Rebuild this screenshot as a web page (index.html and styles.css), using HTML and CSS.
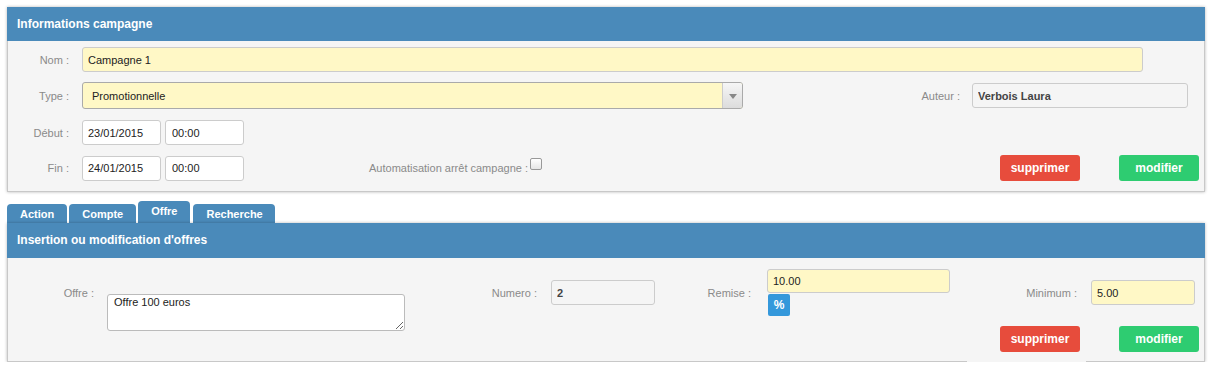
FILE: index.html
```html
<!DOCTYPE html>
<html lang="fr">
<head>
    <meta charset="UTF-8">
    <meta name="viewport" content="width=device-width, initial-scale=1.0">
    <title>Campagne</title>
    <link rel="stylesheet" href="styles.css">
</head>
<body>
    <div class="panel">
        <div class="panel-header">Informations campagne</div>
        <div class="panel-body campagne">
            <div class="row">
                <label class="lbl">Nom :</label>
                <input type="text" class="field yellow nom" value="Campagne 1">
            </div>
            <div class="row row-type">
                <label class="lbl">Type :</label>
                <div class="select">
                    <span>Promotionnelle</span>
                    <span class="select-arrow"></span>
                </div>
                <label class="lbl-inline auteur-lbl">Auteur :</label>
                <input type="text" class="field readonly auteur" value="Verbois Laura" readonly>
            </div>
            <div class="row">
                <label class="lbl">Début :</label>
                <input type="text" class="field date" value="23/01/2015">
                <input type="text" class="field time" value="00:00">
            </div>
            <div class="row">
                <label class="lbl">Fin :</label>
                <input type="text" class="field date" value="24/01/2015">
                <input type="text" class="field time" value="00:00">
                <label class="lbl-inline auto-lbl">Automatisation arrêt campagne :</label>
                <span class="checkbox"></span>
                <div class="buttons">
                    <button class="btn btn-red">supprimer</button>
                    <button class="btn btn-green">modifier</button>
                </div>
            </div>
        </div>
    </div>

    <div class="tabs">
        <div class="tab">Action</div>
        <div class="tab">Compte</div>
        <div class="tab active">Offre</div>
        <div class="tab">Recherche</div>
    </div>

    <div class="panel panel-offres">
        <div class="panel-header tall">Insertion ou modification d'offres</div>
        <div class="panel-body offres">
            <div class="offre-row">
                <label class="lbl-inline l-offre">Offre :</label>
                <textarea class="offre-text">Offre 100 euros</textarea>
                <label class="lbl-inline l-numero">Numero :</label>
                <input type="text" class="field readonly small" value="2" readonly>
                <label class="lbl-inline l-remise">Remise :</label>
                <div class="remise">
                    <input type="text" class="field yellow remise-input" value="10.00">
                    <span class="pct">%</span>
                </div>
                <label class="lbl-inline l-minimum">Minimum :</label>
                <input type="text" class="field yellow small minimum" value="5.00">
            </div>
            <div class="buttons">
                <button class="btn btn-red">supprimer</button>
                <button class="btn btn-green">modifier</button>
            </div>
        </div>
        <div class="bottom-tip"></div>
    </div>
</body>
</html>
```

FILE: styles.css
```css
body {
    margin: 0;
    padding: 7px 11px 0 7px;
    font-family: "Liberation Sans", Arial, sans-serif;
    font-size: 11px;
    color: #222;
    background: #fff;
}
.panel {
    box-shadow: 0 0 3px rgba(0, 0, 0, 0.28);
    position: relative;
}
.panel-header {
    height: 34px;
    line-height: 34px;
    padding-left: 10px;
    background: #4a8aba;
    color: #fff;
    font-weight: bold;
    font-size: 12px;
}
.panel-header.tall {
    height: 35px;
    line-height: 35px;
}
.panel-body {
    background: #f5f5f5;
    border: 1px solid #c8c8c8;
    border-top: none;
}
.campagne {
    padding: 6px 5px 10px 0;
    display: flex;
    flex-direction: column;
    gap: 10px;
}
.row {
    display: flex;
    align-items: center;
}
.row-type {
    margin-bottom: 1px;
}
.lbl {
    width: 61px;
    margin-right: 13px;
    text-align: right;
    color: #8a8a8a;
}
.lbl-inline {
    color: #8a8a8a;
    text-align: right;
}
.field {
    box-sizing: border-box;
    height: 25px;
    border: 1px solid #ccc;
    border-radius: 3px;
    background: #fff;
    font-family: inherit;
    font-size: 11px;
    color: #222;
    padding: 0 5px;
    outline: none;
}
.yellow {
    background: #fff8c6;
}
.readonly {
    background: #f5f5f5;
    font-weight: bold;
    color: #444;
}
.nom {
    width: 1061px;
}
.select {
    box-sizing: border-box;
    width: 661px;
    height: 27px;
    display: flex;
    align-items: center;
    justify-content: space-between;
    border: 1px solid #aaa;
    border-radius: 3px;
    background: #fff8c6;
    padding-left: 9px;
    overflow: hidden;
}
.select-arrow {
    width: 19px;
    height: 100%;
    border-left: 1px solid #ccc;
    background: linear-gradient(#f6f6f6, #dcdcdc);
    position: relative;
}
.select-arrow::after {
    content: "";
    position: absolute;
    left: 6px;
    top: 11px;
    border-left: 4px solid transparent;
    border-right: 4px solid transparent;
    border-top: 5px solid #888;
}
.auteur-lbl {
    margin-left: auto;
    margin-right: 12px;
}
.auteur {
    width: 216px;
    margin-right: 11px;
}
.date {
    width: 79px;
    margin-right: 4px;
}
.time {
    width: 79px;
    padding-left: 6px;
}
.auto-lbl {
    margin-left: 125px;
    margin-right: 2px;
}
.checkbox {
    box-sizing: border-box;
    width: 12px;
    height: 12px;
    border: 1px solid #999;
    border-radius: 2px;
    background: linear-gradient(#fff, #e6e6e6);
    margin-bottom: 8px;
}
.buttons {
    margin-left: auto;
    display: flex;
    justify-content: flex-end;
    gap: 39px;
}
.btn {
    width: 80px;
    height: 26px;
    border: none;
    border-radius: 3px;
    color: #fff;
    font-family: inherit;
    font-weight: bold;
    font-size: 12px;
    padding: 0;
    cursor: pointer;
}
.btn-red {
    background: #e74c3c;
}
.btn-green {
    background: #2ecc71;
}

.tabs {
    display: flex;
    align-items: flex-end;
    gap: 2px;
    margin-top: 9px;
    height: 22px;
}
.tab {
    height: 19px;
    line-height: 20px;
    padding: 0 13px;
    background: #4a8aba;
    color: #fff;
    font-weight: bold;
    font-size: 11px;
    border-radius: 4px 4px 0 0;
}
.tab.active {
    height: 22px;
    line-height: 20px;
}
.tab:last-child {
    margin-left: 1px;
    padding: 0 12px 0 13px;
}

.offres {
    padding: 11px 5px 9px 0;
}
.offre-row {
    display: flex;
    align-items: center;
    height: 47px;
    margin-bottom: 10px;
}
.l-offre {
    width: 86px;
    margin-right: 13px;
}
.offre-text {
    box-sizing: border-box;
    width: 298px;
    height: 37px;
    align-self: flex-start;
    margin-top: 25px;
    border: 1px solid #bbb;
    border-radius: 3px;
    background: #fff;
    font-family: inherit;
    font-size: 11px;
    color: #222;
    padding: 1px 6px;
    outline: none;
}
.l-numero {
    width: 132px;
    margin-right: 14px;
}
.small {
    width: 104px;
}
.l-remise {
    width: 96px;
    margin-right: 16px;
}
.remise {
    display: flex;
    flex-direction: column;
    align-items: flex-start;
    gap: 1px;
}
.remise-input {
    width: 183px;
    height: 24px;
}
.pct {
    width: 22px;
    height: 22px;
    line-height: 22px;
    margin-left: 1px;
    text-align: center;
    background: #3498db;
    color: #fff;
    font-weight: bold;
    font-size: 12px;
    border-radius: 2px;
}
.l-minimum {
    width: 127px;
    margin-right: 14px;
}
.bottom-tip {
    position: absolute;
    left: 960px;
    bottom: -8px;
    width: 119px;
    height: 9px;
    background: #f5f5f5;
}
```
